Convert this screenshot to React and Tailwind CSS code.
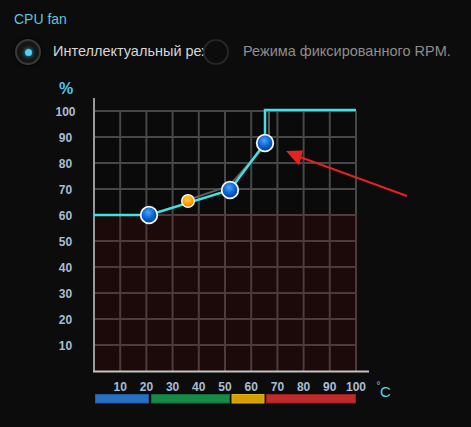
import React from "react";

// plot geometry (page coordinates, svg viewBox is offset to match)
const X0 = 94;
const Y0 = 371;
const xOf = (t) => X0 + 2.62 * t;
const yOf = (p) => Y0 - 2.6 * p;

const TICKS = [10, 20, 30, 40, 50, 60, 70, 80, 90, 100];

const CURVE = [
  [94, 215],
  [149, 215],
  [230, 190],
  [265, 143],
  [265, 110],
  [356, 110],
];

const BAND = [
  { from: 95, to: 149, fill: "#2a6fc4", stroke: "#1f5aa3" },
  { from: 151, to: 230, fill: "#178a47", stroke: "#0f6d37" },
  { from: 231.5, to: 264.5, fill: "#d59f00", stroke: "#e0b020" },
  { from: 266, to: 356, fill: "#bf2a2a", stroke: "#9c1f1f" },
];

function Radio({ checked, className = "" }) {
  return (
    <div
      className={`relative flex items-center justify-center w-[26px] h-[26px] rounded-full border-2 shrink-0 ${
        checked
          ? "border-[#3a3a3a] bg-[#161616] shadow-[0_0_3px_#000]"
          : "border-[#262626] bg-[#0c0c0c]"
      } ${className}`}
    >
      {checked && (
        <div className="w-[7px] h-[7px] rounded-full bg-[#4fd0f5] shadow-[0_0_4px_#3ab8f0]" />
      )}
    </div>
  );
}

function FanChart() {
  return (
    <svg
      width="420"
      height="345"
      viewBox="0 70 420 345"
      className="block"
      style={{ fontFamily: '"Liberation Sans", Arial, sans-serif' }}
    >
      <defs>
        <radialGradient id="blueDot" cx="45%" cy="35%" r="65%">
          <stop offset="0%" stopColor="#4aa2ff" />
          <stop offset="55%" stopColor="#0b64d0" />
          <stop offset="100%" stopColor="#003c96" />
        </radialGradient>
        <radialGradient id="orangeDot" cx="45%" cy="35%" r="65%">
          <stop offset="0%" stopColor="#ffd040" />
          <stop offset="60%" stopColor="#ffa000" />
          <stop offset="100%" stopColor="#e07000" />
        </radialGradient>
      </defs>

      {/* plot background */}
      <rect x="95" y="111" width="261" height="104" fill="#0a0a0a" />
      <rect x="95" y="215" width="261" height="156" fill="#1c0909" />

      {/* grid */}
      {TICKS.map((t) => (
        <g key={"v" + t}>
          <line x1={xOf(t)} y1="111" x2={xOf(t)} y2="215" stroke="#474747" strokeWidth="2" />
          <line x1={xOf(t)} y1="215" x2={xOf(t)} y2="371" stroke="#4e3a3a" strokeWidth="2" />
        </g>
      ))}
      {TICKS.map((p) => (
        <line
          key={"h" + p}
          x1="95"
          y1={yOf(p)}
          x2="356"
          y2={yOf(p)}
          stroke={p > 60 ? "#474747" : "#4e3a3a"}
          strokeWidth="2"
        />
      ))}

      {/* axes */}
      <line x1="94" y1="98" x2="94" y2="372" stroke="#9a9a9a" strokeWidth="2" />
      <line x1="93" y1="371.5" x2="369" y2="371.5" stroke="#c4c4c4" strokeWidth="2" />

      {/* axis labels */}
      <text x="66" y="94" textAnchor="middle" fontSize="16" fontWeight="bold" fill="#4fc6ea">
        %
      </text>
      {TICKS.map((p) => (
        <text
          key={"yl" + p}
          x="65.5"
          y={yOf(p) + 4.5}
          textAnchor="middle"
          fontSize="12"
          fontWeight="bold"
          fill="#a9bdd4"
        >
          {p}
        </text>
      ))}
      {TICKS.map((t) => (
        <text
          key={"xl" + t}
          x={xOf(t)}
          y="391"
          textAnchor="middle"
          fontSize="12"
          fontWeight="bold"
          fill="#a9bdd4"
        >
          {t}
        </text>
      ))}
      <text x="376.5" y="389" fontSize="10" fill="#5cd6e6">
        °
      </text>
      <text x="380" y="397" fontSize="15" fill="#5cd6e6">
        C
      </text>

      {/* temperature band */}
      {BAND.map((b) => (
        <rect
          key={b.from}
          x={b.from + 0.5}
          y="394.5"
          width={b.to - b.from - 1}
          height="8.5"
          fill={b.fill}
          stroke={b.stroke}
          strokeWidth="1"
        />
      ))}

      {/* reference curve */}
      <polyline
        points="188,200 229,186 263,148"
        fill="none"
        stroke="#5c5c5c"
        strokeWidth="2"
      />
      <line x1="269" y1="111" x2="269" y2="140" stroke="#5c5c5c" strokeWidth="2" />

      {/* fan curve */}
      <polyline
        points={CURVE.map((p) => p.join(",")).join(" ")}
        fill="none"
        stroke="#3fe2e2"
        strokeWidth="2.5"
        strokeLinejoin="miter"
      />

      {/* points */}
      <circle cx="188" cy="201" r="6.3" fill="url(#orangeDot)" stroke="#f4f4f4" strokeWidth="1.5" />
      {[
        [149, 215],
        [230, 190],
        [265, 143],
      ].map(([cx, cy]) => (
        <circle
          key={cx}
          cx={cx}
          cy={cy}
          r="8.3"
          fill="url(#blueDot)"
          stroke="#f4f4f4"
          strokeWidth="1.8"
        />
      ))}

      {/* red arrow */}
      <line x1="407" y1="196" x2="300" y2="157" stroke="#e32222" strokeWidth="2" />
      <polygon points="286,151 303,150.5 299,165.5" fill="#e32222" />
    </svg>
  );
}

export default function App() {
  return (
    <div
      className="relative w-[471px] h-[427px] overflow-hidden bg-[#0c0c0c] flex flex-col"
      style={{ fontFamily: '"Liberation Sans", Arial, sans-serif' }}
    >
      <div className="pt-[11px] pl-[14px] text-[14px] leading-4 text-[#5cc6de]">CPU fan</div>

      <div className="mt-[12px] h-[26px] pl-[15px] flex items-center">
        <Radio checked />
        {/* label is cut by the second radio, as in the app */}
        <div className="ml-[12px] w-[152px] overflow-hidden whitespace-nowrap text-[14.5px] text-[#d6d6d6]">
          Интеллектуальный реж
        </div>
        <Radio className="-ml-[2px]" />
        <div className="ml-[14px] whitespace-nowrap text-[14.5px] text-[#8c8c8c]">
          Режима фиксированного RPM.
        </div>
      </div>

      <div className="mt-[5px]">
        <FanChart />
      </div>
    </div>
  );
}
